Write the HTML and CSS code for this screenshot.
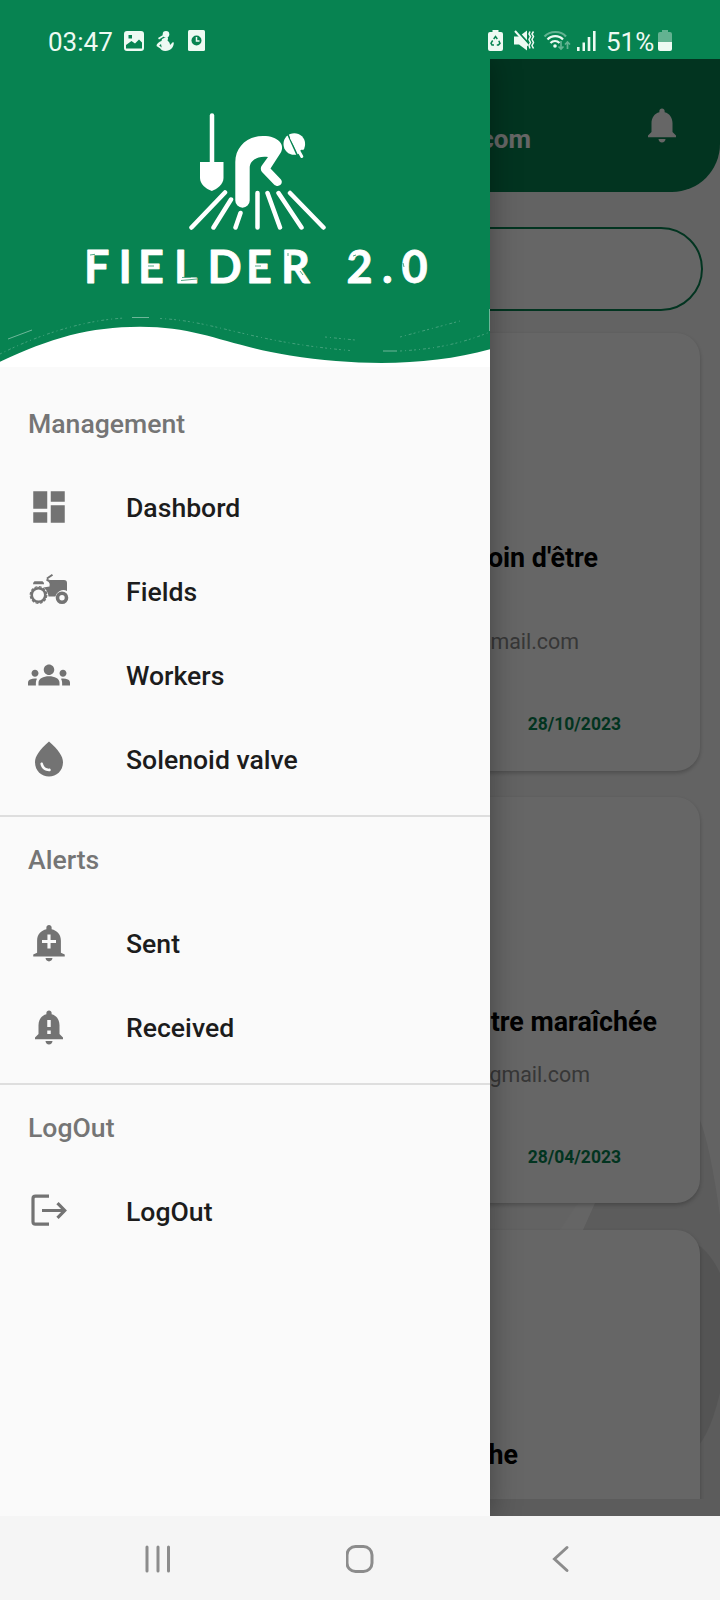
FILE: index.html
```html
<!DOCTYPE html>
<html lang="en">
<head>
<meta charset="utf-8">
<title>Fielder 2.0</title>
<link rel="stylesheet" href="styles.css">
</head>
<body>
<div class="phone">
  <header class="status">
    <span class="clock">03:47</span>
    <svg class="st-picture" width="20" height="20" viewBox="0 0 20 20"><path fill-rule="evenodd" d="M3 0h14a3 3 0 0 1 3 3v14a3 3 0 0 1-3 3H3a3 3 0 0 1-3-3V3a3 3 0 0 1 3-3zM2 14v3.500h16v-6l-3-3-4 4-3.500-2.500zM4.500 4v3.500H8V4z"/></svg>
    <svg class="st-person" width="18" height="20" viewBox="0 0 18 20"><circle cx="10" cy="3.300" r="3.300"/><path fill-rule="evenodd" d="M6 8l5-2.500c1.500 1 1 3 .5 4 2 1.500 2.500 3 2.500 4.500l3-3 .8.700c0 4-3 8.300-8.500 8.300-3 0-4-1-5-2.500L.5 15C.5 12.500 3 11 5.500 10zM5 13l-1.800 1.500 2.500 2z"/><path d="M2 7l5-3 .8 1.500L3 8.500z"/></svg>
    <svg class="st-alarm" width="17" height="21" viewBox="0 0 17 21"><rect width="17" height="21" rx="1.500"/><circle class="cut" cx="8.500" cy="10.500" r="5"/><path class="hand" d="M8.500 7v4h3"/></svg>
    <svg class="st-saver" width="15" height="21" viewBox="0 0 15 21"><path d="M4.500 0h6v2H13a2 2 0 0 1 2 2v15a2 2 0 0 1-2 2H2a2 2 0 0 1-2-2V4a2 2 0 0 1 2-2h2.500z"/><path class="recycle" d="M5.700 9l1.800-2.500L9.300 9M10.800 10.800l1.200 2.600-1.500 1.500H8.800M6 14.900H4L3 13.200l1.700-2.700"/></svg>
    <svg class="st-mute" width="21" height="21" viewBox="0 0 21 21"><path d="M0 6.500h5l8-6v20l-8-6H0z"/><path class="slash-gap" d="M2.500 0l12 13.500"/><path class="slash" d="M1 1l13 14.500"/><path class="buzz" d="M16 1.500l-1 2.500 1.500 2.500-1.500 3 1.500 3-1.500 3 1 3M19.500 1.500L18 4l1.500 2.500-1.500 3 1.500 3-1.500 3 1.500 3"/></svg>
    <svg class="st-wifi" width="28" height="22" viewBox="0 0 28 22"><g class="arcs"><path class="dim" d="M1.500 6.500C7 .5 18 .5 23 6.500"/><path d="M4.500 9.500c4-4.500 11.500-4.500 15.500 0M7.500 13c2.500-2.700 6.500-2.700 9 0"/></g><circle cx="12" cy="16" r="1.800"/><path class="dim arrows" d="M18 11v8m-2.500-2.500L18 19l2.500-2.500M24.500 19v-7m-2.500 2.500l2.500-2.500 2.500 2.500"/></svg>
    <svg class="st-signal" width="19" height="20" viewBox="0 0 19 20"><path d="M0 16h2.600v4H0zM5.500 11.500H8V20H5.500zM10.700 6h2.600v14h-2.600zM16 0h2.600v20H16z"/></svg>
    <span class="percent">51%</span>
    <svg class="st-battery" width="14" height="21" viewBox="0 0 14 21"><path class="dim" d="M4 0h6v2h2a2 2 0 0 1 2 2v8H0V4a2 2 0 0 1 2-2h2z"/><path d="M0 12h14v7a2 2 0 0 1-2 2H2a2 2 0 0 1-2-2z"/></svg>
  </header>

  <div class="app">
    <svg class="backdrop" width="720" height="1457" viewBox="0 59 720 1457"><path fill="#fcfcfc" d="M560 1230l18-27h19l-14 27z"/><path fill="#e5e5e5" d="M583 1230l12-27 105-83q10 25 20 95v301H480v-286z"/><path fill="#d2d2d2" d="M690 1240q18 8 30 33v120q-12 50-30 60z"/></svg>
    <main class="page">
      <div class="topbar">
        <span class="account">.com</span>
        <svg width="42" height="42" viewBox="0 0 24 24"><path fill="#fff" d="M12 22c1.100 0 2-.9 2-2h-4c0 1.100.89 2 2 2zm6-6v-5c0-3.070-1.640-5.640-4.500-6.320V4c0-.83-.67-1.500-1.500-1.500s-1.500.67-1.500 1.500v.68C7.630 5.360 6 7.920 6 11v5l-2 2v1h16v-1l-2-2z"/></svg>
      </div>
      <div class="search"></div>
      <article class="card card-a">
        <h2 class="title">oin d'être</h2>
        <p class="mail">mail.com</p>
        <p class="date">28/10/2023</p>
      </article>
      <article class="card card-b">
        <h2 class="title">tre maraîchée</h2>
        <p class="mail">gmail.com</p>
        <p class="date">28/04/2023</p>
      </article>
      <article class="card card-c">
        <h2 class="title">he</h2>
      </article>
    </main>
    <div class="scrim"></div>

    <nav class="drawer">
      <svg class="brand" width="490" height="308" viewBox="0 59 490 308">
        <rect y="59" width="490" height="308" fill="#078351"/>
        <path fill="#fff" d="M0 361.700C50 338 90 326.700 140 326.700C200 326.700 225 345 290 355.500C360 366.500 430 366 490 349.300V367H0z"/>
        <g class="trace">
          <path d="M8 339l24-9"/>
          <path class="dots" d="M0 354C40 334 85 320 125 318"/>
          <path d="M132 317.500h17"/>
          <path class="dots" d="M160 318.500C215 321 250 342 350 350.500M325 337l30 3M400 337l60-16"/>
          <path d="M383 351h14"/>
          <path class="dots" d="M400 351C435 349 460 344 490 332"/>
          <path d="M489.500 309v22"/>
        </g>
        <g fill="#fff">
          <path d="M200 162h23.500v16c0 6-6 11-11.700 13-6-2-11.800-7-11.800-13z"/>
          <path d="M235.300 200.500V162C235.300 147 247 136 263 136C271 136 276 138 279.500 141.500C283 145 282.500 150 280.500 153L270.500 168.500L280.500 179C284.500 183.500 278.500 188.500 274 184.500L262 172C260.500 170 260.500 168 261.500 166L268 157C258 155.500 249.700 160 249.700 168V200.500A7.200 7.200 0 0 1 235.300 200.500z"/>
          <circle cx="294.300" cy="144" r="10.800"/>
        </g>
        <path d="M287 132.500L298.500 158" stroke="#078351" stroke-width="1.600" fill="none"/>
        <path d="M298 152l4-2.500 4 3-4 6z" fill="#078351"/>
        <g class="rays">
          <path class="handle" d="M212 115.500V164"/>
          <path d="M291.500 138l10.300 18.500"/>
          <path d="M225 192.500L191.500 227.500M231 199.500L213.500 227.500M240.500 213L235.500 227.500M257.500 193V227.500M267.500 193L280 227.500M278.500 193L301.500 227.500M290 193L323.500 227.500"/>
        </g>
        <text class="wordmark" y="282.500" x="84 118.500 138 174 207.500 246 281 300 346.500 382 401.500">FIELDER 2.0</text>
        <path class="scratch" d="M90 255l5-.7M148 266h6M181 280.500l16-1.500M182 277.500l9-.5M255 266h6M288 253v3M300 271l3 4M353 256l3-1M403 263l1 4"/>
      </svg>

      <section class="group">
        <h3 class="label">Management</h3>
        <a class="item"><svg class="icon" viewBox="0 0 24 24"><path d="M3 13h8V3H3v10zm0 8h8v-6H3v6zm10 0h8V11h-8v10zm0-18v6h8V3h-8z"/></svg>Dashbord</a>
        <a class="item"><svg class="icon" viewBox="0 0 42 42"><path d="M6.500 11.300h8q2 1.500 1.500 3h-11Q5 12.500 6.500 11.300z"/><path d="M22 10h14q3 0 3 3v8a8 8 0 0 0-11.500 5.500h-7Q19.500 20 15.500 17.500l6-1z"/><path class="line" d="M18.500 9.500q4 1.500 4 4M19 8.500l5.500-3.800"/><circle class="tyre" cx="10.500" cy="25" r="6.800"/><circle class="tread" cx="10.500" cy="25" r="8.300"/><circle class="front" cx="34" cy="27.700" r="4.500"/></svg>Fields</a>
        <a class="item"><svg class="icon" viewBox="0 0 24 24"><path d="M12 12.750c1.630 0 3.070.39 4.240.9 1.080.48 1.760 1.560 1.760 2.730V18H6v-1.610c0-1.180.68-2.260 1.760-2.730 1.170-.52 2.610-.91 4.240-.91zM4 13c1.100 0 2-.9 2-2s-.9-2-2-2-2 .9-2 2 .9 2 2 2zm1.130 1.100C4.760 14.040 4.390 14 4 14c-.99 0-1.930.21-2.780.58C.48 14.900 0 15.620 0 16.430V18h4.500v-1.610c0-.83.23-1.610.63-2.290zM20 13c1.100 0 2-.9 2-2s-.9-2-2-2-2 .9-2 2 .9 2 2 2zm4 3.430c0-.81-.48-1.530-1.220-1.850C21.930 14.210 20.990 14 20 14c-.39 0-.76.04-1.130.1.400.68.630 1.460.63 2.290V18H24v-1.570zM12 6c1.660 0 3 1.340 3 3s-1.340 3-3 3-3-1.340-3-3 1.340-3 3-3z"/></svg>Workers</a>
        <a class="item"><svg class="icon" viewBox="0 0 24 24"><path d="M12 2c-5.330 4.550-8 8.480-8 11.800 0 4.980 3.800 8.200 8 8.200s8-3.220 8-8.200c0-3.320-2.670-7.250-8-11.800zM7.830 14c.37 0 .67.26.74.62.41 2.220 2.280 2.980 3.640 2.870.43-.02.79.32.79.75 0 .4-.32.73-.72.750-2.130.13-4.620-1.090-5.190-4.120-.08-.45.28-.87.74-.87z"/></svg>Solenoid valve</a>
      </section>
      <section class="group">
        <h3 class="label">Alerts</h3>
        <a class="item"><svg class="icon" viewBox="0 0 24 24"><path fill-rule="evenodd" d="M10 20.600c.2 1.200 1 1.900 2 1.900s1.800-.7 2-1.900zM18.800 17.500V10.500c0-3.300-2.300-5.600-5.300-6.300V3.200c0-.83-.67-1.500-1.500-1.500s-1.500.67-1.500 1.500v1C7.500 4.900 5.200 7.200 5.200 10.500v7l-2.200 1v1.200h18v-1.200zM16 12V10.300h-3.100V7.200h-1.800v3.100H8V12h3.100v3.100h1.800V12z"/></svg>Sent</a>
        <a class="item"><svg class="icon" viewBox="0 0 24 24"><path d="M18 16v-5c0-3.070-1.640-5.640-4.500-6.320V4c0-.83-.67-1.500-1.500-1.500s-1.500.67-1.500 1.500v.68C7.630 5.360 6 7.920 6 11v5l-2 2v1h16v-1l-2-2zm-5 0h-2v-2h2v2zm0-4h-2V8h2v4zm-1 10c1.100 0 2-.9 2-2h-4c0 1.100.89 2 2 2z"/></svg>Received</a>
      </section>
      <section class="group">
        <h3 class="label">LogOut</h3>
        <a class="item"><svg class="icon" viewBox="0 0 42 42"><path class="exit" d="M21 6.200H7.500q-2.500 0-2.500 2.500v23q0 2.500 2.500 2.500H21M14 20.500h22M29.500 13.200l7.200 7.300-7.200 7.300"/></svg>LogOut</a>
      </section>
    </nav>
  </div>

  <footer class="navbar">
    <svg width="28" height="28" viewBox="0 0 28 28"><path d="M2 2v24M13 2v24M23.500 2v24"/></svg>
    <svg width="28" height="28" viewBox="0 0 28 28"><rect x="1" y="1.500" width="25" height="25" rx="8.500"/></svg>
    <svg width="28" height="28" viewBox="0 0 28 28"><path d="M21 2.500L8.500 14 21 25.500"/></svg>
  </footer>
</div>
</body>
</html>
```
FILE: styles.css
```css
* { box-sizing: border-box; }
body { margin: 0; font-family: Roboto, "Noto Sans", sans-serif; }
h2, h3, p { margin: 0; }
svg { display: block; flex: none; }

.phone { width: 720px; height: 1600px; display: flex; flex-direction: column; overflow: hidden; }

.status { height: 59px; background: #078351; color: #eefaf3; display: flex; align-items: flex-start; padding: 30px 0 0 48px; font-size: 26px; line-height: 30px; }
.status svg { fill: #eefaf3; }
.status span { margin-top: -3px; white-space: nowrap; }
.clock { width: 76px; }
.status .cut { fill: #078351; }
.status .hand { fill: none; stroke: #eefaf3; stroke-width: 1.5; }
.status .recycle { fill: none; stroke: #078351; stroke-width: 1.5; }
.status .slash-gap { stroke: #078351; stroke-width: 2; }
.status .slash { stroke: #eefaf3; stroke-width: 2; }
.status .buzz { fill: none; stroke: #eefaf3; stroke-width: 1.5; }
.status .arcs path { fill: none; stroke: #eefaf3; stroke-width: 2.2; }
.status .dim { opacity: .4; }
.status .arrows { fill: none; stroke: #eefaf3; stroke-width: 1.7; }
.st-picture { margin-top: 1px; }
.st-person { margin: 1px 0 0 12px; }
.st-alarm { margin-left: 14px; }
.st-saver { margin-left: 283px; }
.st-mute { margin-left: 11px; }
.st-wifi { margin-left: 8px; }
.st-signal { margin: 1px 10px 0 6px; }
.percent { width: 52px; }

.app { position: relative; height: 1457px; background: #f8f8f8; overflow: hidden; }
.backdrop { position: absolute; left: 0; top: 0; }
.page { position: relative; height: 1440px; overflow: hidden; }
.topbar { height: 133px; background: #078351; border-radius: 0 0 48px 0; display: flex; justify-content: flex-end; padding: 45px 37px 0 0; color: #fff; }
.account { font-size: 26px; font-weight: 700; line-height: 30px; margin: 20px 110px 0 0; }
.search { height: 84px; margin: 35px 17px 22px; border: 2px solid #078351; border-radius: 42px; background: #fff; }
.card { margin: 0 20px 26px; background: #fff; border-radius: 24px; box-shadow: 0 2px 4px rgba(0,0,0,.24); text-align: right; }
.title { font-size: 26.8px; line-height: 30px; font-weight: 700; color: #000; }
.mail { font-size: 21.4px; line-height: 26px; color: #8a8a8a; }
.date { font-size: 17.500px; line-height: 22px; font-weight: 700; color: #078351; padding-right: 79px; }
.card-a { height: 438px; padding-top: 210px; }
.card-a .title { padding-right: 102px; }
.card-a .mail { padding: 56px 121px 58px 0; }
.card-b { height: 406px; margin-bottom: 27px; padding-top: 210px; }
.card-b .title { padding-right: 43px; }
.card-b .mail { padding: 25px 110px 58px 0; }
.card-c { height: 400px; padding-top: 210px; }
.card-c .title { padding-right: 182px; }
.scrim { position: absolute; inset: 0; background: rgba(0,0,0,.6); }

.drawer { position: absolute; left: 0; top: 0; width: 490px; height: 1457px; background: #fafafa; box-shadow: 0 0 28px rgba(0,0,0,.35); }
.brand { margin-bottom: 15px; }
.trace path { fill: none; stroke: #fff; stroke-width: .7; opacity: .6; }
.trace .dots { stroke-dasharray: 2 3 1 3 3 2; opacity: .35; }
.rays path { fill: none; stroke: #fff; stroke-width: 4.500; stroke-linecap: round; }
.rays path:nth-child(2) { stroke-width: 3; }
.wordmark { font: 700 45px Lato, sans-serif; fill: #fff; stroke: #fff; stroke-width: .8; stroke-linejoin: round; }
.scratch { fill: none; stroke: #078351; stroke-width: .7; }

.group { padding-bottom: 13px; border-bottom: 2px solid #dedede; margin-bottom: 1px; }
.group:last-child { border-bottom: 0; }
.label, .item { height: 84px; display: flex; align-items: center; font-size: 26.6px; font-weight: 500; padding-left: 28px; line-height: 30px; }
.label { color: #757575; }
.item { color: #1c1c1c; }
.icon { width: 42px; height: 42px; margin: -2px 56px 0 0; fill: #737373; }
.icon .line { fill: none; stroke: #737373; stroke-width: 2; }
.icon .tyre { fill: none; stroke: #737373; stroke-width: 2.600; }
.icon .tread { fill: none; stroke: #737373; stroke-width: 1.200; stroke-dasharray: 2.900 1.450; }
.icon .front { fill: none; stroke: #737373; stroke-width: 3.600; }
.icon .exit { fill: none; stroke: #737373; stroke-width: 3.200; }

.navbar { height: 84px; background: #f5f5f5; display: flex; align-items: flex-start; gap: 172.5px; padding: 29px 0 0 145px; }
.navbar svg { fill: none; stroke: #8c8c8c; stroke-width: 3; stroke-linecap: round; }
```
